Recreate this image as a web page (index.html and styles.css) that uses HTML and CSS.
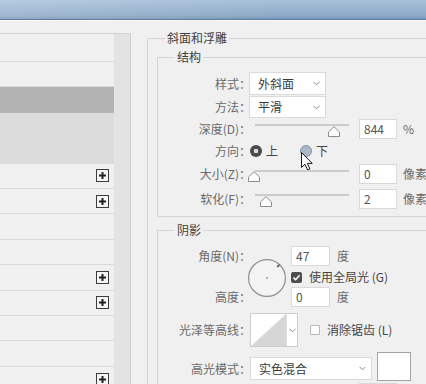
FILE: index.html
```html
<!DOCTYPE html>
<html lang="zh-CN">
<head>
<meta charset="utf-8">
<title>图层样式</title>
<link rel="stylesheet" href="styles.css">
</head>
<body>
<div class="titlebar"></div>
<div class="main">
  <div class="sidebar">
    <div class="listbox">
      <div class="list">
        <div class="item"></div>
        <div class="item"></div>
        <div class="item sel"></div>
        <div class="item sub"></div>
        <div class="item sub2"></div>
        <div class="item"><svg class="plus" width="13" height="13" viewBox="0 0 13 13"><rect x="0.5" y="0.5" width="12" height="12" fill="#f6f6f6" stroke="#3d3d3d"/><path d="M3 6.5h7M6.5 3v7" stroke="#222" stroke-width="2"/></svg></div>
        <div class="item"><svg class="plus" width="13" height="13" viewBox="0 0 13 13"><rect x="0.5" y="0.5" width="12" height="12" fill="#f6f6f6" stroke="#3d3d3d"/><path d="M3 6.5h7M6.5 3v7" stroke="#222" stroke-width="2"/></svg></div>
        <div class="item"></div>
        <div class="item"></div>
        <div class="item"><svg class="plus" width="13" height="13" viewBox="0 0 13 13"><rect x="0.5" y="0.5" width="12" height="12" fill="#f6f6f6" stroke="#3d3d3d"/><path d="M3 6.5h7M6.5 3v7" stroke="#222" stroke-width="2"/></svg></div>
        <div class="item"><svg class="plus" width="13" height="13" viewBox="0 0 13 13"><rect x="0.5" y="0.5" width="12" height="12" fill="#f6f6f6" stroke="#3d3d3d"/><path d="M3 6.5h7M6.5 3v7" stroke="#222" stroke-width="2"/></svg></div>
        <div class="item"></div>
        <div class="item"></div>
        <div class="item"><svg class="plus" width="13" height="13" viewBox="0 0 13 13"><rect x="0.5" y="0.5" width="12" height="12" fill="#f6f6f6" stroke="#3d3d3d"/><path d="M3 6.5h7M6.5 3v7" stroke="#222" stroke-width="2"/></svg></div>
      </div>
      <div class="scroll"></div>
    </div>
  </div>

  <div class="panel">
    <fieldset class="outer">
      <legend>斜面和浮雕</legend>

      <fieldset class="inner">
        <legend>结构</legend>
        <div class="row h25">
          <span class="lbl">样式：</span>
          <span class="select s-style"><span>外斜面</span><svg width="7" height="5" viewBox="0 0 7 5"><polyline points="0.5,0.8 3.5,3.8 6.5,0.8" fill="none" stroke="#8a8a8a"/></svg></span>
        </div>
        <div class="row h22">
          <span class="lbl">方法：</span>
          <span class="select s-method"><span>平滑</span><svg width="7" height="5" viewBox="0 0 7 5"><polyline points="0.5,0.8 3.5,3.8 6.5,0.8" fill="none" stroke="#8a8a8a"/></svg></span>
        </div>
        <div class="row h21">
          <span class="lbl">深度(D)：</span>
          <span class="slider"><span class="track"></span><svg class="thumb" style="left:83px" width="12" height="11" viewBox="0 0 12 11"><path d="M6 0.7 L11.5 6 V10.5 H0.5 V6 Z" fill="#fff" stroke="#8d8d8d"/></svg></span>
          <span class="field">844</span>
          <span class="unit">%</span>
        </div>
        <div class="row h23 dir">
          <span class="lbl">方向：</span>
          <span class="radio on"></span><span class="rlbl">上</span>
          <span class="radio hover"></span><span class="rlbl">下</span>
          <svg class="cursor" width="13" height="19" viewBox="0 0 13 19"><path d="M0.5 0.5 L0.5 15.5 L4 12.2 L6.6 18 L8.9 17 L6.4 11.4 L11.2 11.4 Z" fill="#fff" stroke="#1a1a1a" stroke-linejoin="round"/></svg>
        </div>
        <div class="row h24">
          <span class="lbl">大小(Z)：</span>
          <span class="slider"><span class="track"></span><svg class="thumb" style="left:3px" width="12" height="11" viewBox="0 0 12 11"><path d="M6 0.7 L11.5 6 V10.5 H0.5 V6 Z" fill="#fff" stroke="#8d8d8d"/></svg></span>
          <span class="field">0</span>
          <span class="unit">像素</span>
        </div>
        <div class="row h25">
          <span class="lbl">软化(F)：</span>
          <span class="slider"><span class="track"></span><svg class="thumb" style="left:15px" width="12" height="11" viewBox="0 0 12 11"><path d="M6 0.7 L11.5 6 V10.5 H0.5 V6 Z" fill="#fff" stroke="#8d8d8d"/></svg></span>
          <span class="field">2</span>
          <span class="unit">像素</span>
        </div>
      </fieldset>

      <fieldset class="inner shade">
        <legend>阴影</legend>
        <div class="angle">
          <span class="lbl a-lbl1">角度(N)：</span>
          <svg class="dial" width="40" height="40" viewBox="0 0 40 40">
            <circle cx="20" cy="20" r="18.4" fill="#f3f3f3" stroke="#8e8e8e" stroke-width="1.2"/>
            <circle cx="20" cy="20" r="1" fill="#9a9a9a"/>
            <line x1="30.2" y1="9.1" x2="32.4" y2="6.8" stroke="#6a6a6a" stroke-width="2"/>
          </svg>
          <span class="cell c1"><span class="field f-angle">47</span><span class="unit u-deg">度</span></span>
          <span class="cell c2"><span class="check"><svg width="9" height="9" viewBox="0 0 9 9"><polyline points="1.5,4.6 3.6,6.7 7.6,2.2" fill="none" stroke="#fff" stroke-width="1.6"/></svg></span><span class="clbl">使用全局光 (G)</span></span>
          <span class="lbl a-lbl3">高度：</span>
          <span class="cell c3"><span class="field f-angle">0</span><span class="unit u-deg">度</span></span>
        </div>
        <div class="row h34 contour-row">
          <span class="lbl">光泽等高线：</span>
          <span class="contour">
            <svg class="preview" width="35" height="32" viewBox="0 0 35 32"><polygon points="0,32 35,0 35,32" fill="#d6d6d6"/></svg>
            <span class="cdrop"><svg width="7" height="5" viewBox="0 0 7 5"><polyline points="0.5,0.8 3.5,3.8 6.5,0.8" fill="none" stroke="#8a8a8a"/></svg></span>
          </span>
          <span class="box"></span><span class="clbl2">消除锯齿 (L)</span>
        </div>
        <div class="row mode-row">
          <span class="lbl mlbl">高光模式：</span>
          <span class="select s-mode"><span>实色混合</span><svg width="7" height="5" viewBox="0 0 7 5"><polyline points="0.5,0.8 3.5,3.8 6.5,0.8" fill="none" stroke="#8a8a8a"/></svg></span>
          <span class="swatch"></span>
        </div>
        <div class="row h21 opacity-row">
          <span class="lbl"></span>
          <span class="slider"><span class="track"></span></span>
          <span class="field"></span>
        </div>
      </fieldset>
    </fieldset>
  </div>
</div>
</body>
</html>
```
FILE: styles.css
```css
* { box-sizing: border-box; }
html, body { margin: 0; padding: 0; }
body {
  width: 426px;
  height: 384px;
  overflow: hidden;
  background: #f0f0f0;
  font-family: "Noto Sans CJK SC", "Noto Sans", sans-serif;
  font-size: 12px;
  line-height: 16px;
  color: #5e5e5e;
}

.titlebar {
  height: 20px;
  border-bottom: 1px solid #5f7d9b;
  background:
    linear-gradient(90deg, rgba(255,255,255,0.16), rgba(255,255,255,0) 65%),
    linear-gradient(#a8c1d9, #8eabc8 80%, #7b99b7);
}

.main {
  display: flex;
  height: 364px;
  border-top: 1px solid #fbfbfb;
}

/* left list */
.sidebar {
  flex: none;
  width: 131px;
  padding-top: 12px;
}
.listbox {
  display: flex;
  height: 100%;
  border-top: 1px solid #d4d4d4;
  border-right: 1px solid #cecece;
}
.list {
  flex: none;
  width: 114px;
  padding-top: 2.58px;
}
.scroll {
  flex: 1;
  background: #e3e3e3;
}
.item {
  height: 25.42px;
  border-bottom: 1px solid #d9d9d9;
  display: flex;
  align-items: center;
  justify-content: flex-end;
  padding-right: 5px;
}
.item.sel { background: #b3b3b3; border-bottom-color: #b3b3b3; }
.item.sub { background: #dcdcdc; border-bottom-color: #dcdcdc; }
.item.sub2 { background: #dcdcdc; }
.plus { display: block; }

/* right panel */
.panel {
  flex: none;
  width: 295px;
}
fieldset { min-width: 0; }
legend {
  padding: 0 2px;
  color: #3f3f3f;
  line-height: 16px;
}
.outer {
  width: 330px;
  margin: 9px 0 0 16px;
  padding: 3px 0 0 9px;
  border: 1px solid #d4d4d4;
}
.outer > legend { margin-left: 8px; }
.inner {
  margin: 0;
  padding: 6px 0 5px 17px;
  border: 1px solid #d4d4d4;
}
.inner.shade {
  margin-top: 5px;
  padding-top: 8px;
}

.row {
  display: flex;
  align-items: center;
  position: relative;
}
.h21 { height: 21px; }
.h22 { height: 22px; }
.h23 { height: 23px; }
.h24 { height: 24px; }
.h25 { height: 25px; }
.h34 { height: 34px; }

.lbl {
  flex: none;
  width: 76px;
  text-align: right;
  white-space: nowrap;
  color: #6a6a6a;
}

.select {
  flex: none;
  display: flex;
  align-items: center;
  justify-content: space-between;
  background: #fff;
  border: 1px solid #dadada;
  color: #3a3a3a;
  padding: 0 5px 0 8px;
}
.select svg { display: block; }
.s-style { width: 77px; height: 23px; margin-left: -2px; }
.s-method { width: 77px; height: 22px; margin-left: -2px; }
.s-mode { width: 122px; height: 23px; margin-left: -1px; margin-bottom: 1px; }

.slider {
  position: relative;
  flex: none;
  width: 108px;
  height: 100%;
}
.track {
  position: absolute;
  left: 4px;
  right: 10px;
  top: calc(50% - 4.5px);
  height: 2px;
  background: #cbcbcb;
}
.thumb {
  position: absolute;
  top: calc(50% - 3px);
  margin-left: -6px;
  display: block;
}

.field {
  flex: none;
  width: 38px;
  height: 20px;
  background: #fff;
  border: 1px solid #d8d8d8;
  padding: 0 4px;
  line-height: 18px;
  color: #555;
}
.unit {
  margin-left: 6px;
  color: #6a6a6a;
  white-space: nowrap;
}

/* direction radios */
.radio {
  flex: none;
  width: 12px;
  height: 12px;
  border-radius: 50%;
}
.radio.on {
  margin-left: -1px;
  background: radial-gradient(circle, #dcdcdc 0 2px, #4b4b4b 2.6px);
}
.radio.hover {
  margin-left: 22px;
  background: #a9b9c9;
  border: 1px solid #8797a9;
}
.rlbl {
  margin-left: 4px;
  color: #454545;
}
.cursor {
  position: absolute;
  left: 126px;
  top: 13px;
}

/* angle block */
.angle {
  display: grid;
  grid-template-columns: 76px 39px auto;
  grid-template-rows: 20px 21px 20px;
  align-items: center;
}
.a-lbl1 { grid-column: 1; grid-row: 1; }
.a-lbl3 { grid-column: 1; grid-row: 3; }
.dial {
  grid-column: 2;
  grid-row: 1 / 4;
  margin-left: -4px;
  margin-top: 2px;
  display: block;
}
.cell { display: flex; align-items: center; }
.c1 { grid-column: 3; grid-row: 1; }
.c2 { grid-column: 3; grid-row: 2; }
.c3 { grid-column: 3; grid-row: 3; }
.f-angle { width: 39px; margin-left: 1px; }
.u-deg { margin-left: 7px; }
.check {
  flex: none;
  width: 11px;
  height: 11px;
  margin-left: 1px;
  margin-top: 1px;
  border-radius: 2px;
  background: #4f4f4f;
  display: flex;
  align-items: center;
  justify-content: center;
}
.check svg { display: block; }
.clbl {
  margin-left: 7px;
  color: #454545;
  white-space: nowrap;
}

/* contour */
.contour-row { margin-top: 6px; }
.contour {
  flex: none;
  display: flex;
  height: 34px;
  margin-left: -1px;
  background: #fff;
  border: 1px solid #cdcdcd;
}
.preview { display: block; }
.cdrop {
  width: 11px;
  border-left: 1px solid #e0e0e0;
  display: flex;
  align-items: center;
  justify-content: center;
}
.cdrop svg { display: block; }
.box {
  flex: none;
  width: 10px;
  height: 10px;
  margin-left: 12px;
  background: #fff;
  border: 1px solid #b8b8b8;
  border-radius: 1px;
}
.clbl2 {
  margin-left: 7px;
  color: #454545;
  white-space: nowrap;
}

/* highlight mode */
.mode-row {
  height: 29px;
  margin-top: 5px;
  align-items: flex-end;
}
.mlbl {
  line-height: 23px;
  margin-bottom: 1px;
}
.swatch {
  flex: none;
  width: 34px;
  height: 29px;
  margin-left: 5px;
  background: #fff;
  border: 1px solid #a4a4a4;
}
.opacity-row { margin-top: 1px; }
```
